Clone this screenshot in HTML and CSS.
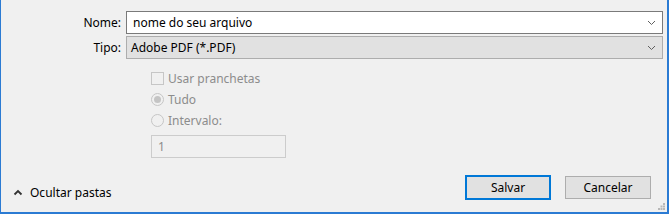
FILE: index.html
```html
<!DOCTYPE html>
<html>
<head>
  <meta charset="UTF-8" />
  <title>Salvar como</title>
  <link rel="stylesheet" href="styles.css">
</head>
<body>
<div class="dialog">
  <div class="fields">
    <div class="row">
      <label class="lbl">Nome:</label>
      <div class="combo edit">
        <span class="val">nome do seu arquivo</span>
        <svg class="arrow" width="9" height="6" viewBox="0 0 9 6"><polyline points="1,1 4.5,4.5 8,1" fill="none" stroke="#606060" stroke-width="1"/></svg>
      </div>
    </div>
    <div class="row">
      <label class="lbl">Tipo:</label>
      <div class="combo list">
        <span class="val">Adobe PDF (*.PDF)</span>
        <svg class="arrow" width="9" height="6" viewBox="0 0 9 6"><polyline points="1,1 4.5,4.5 8,1" fill="none" stroke="#606060" stroke-width="1"/></svg>
      </div>
    </div>
  </div>

  <div class="options">
    <div class="opt"><span class="check"></span>Usar pranchetas</div>
    <div class="opt"><span class="radio on"></span>Tudo</div>
    <div class="opt"><span class="radio"></span>Intervalo:</div>
    <div class="range">1</div>
  </div>

  <div class="footer">
    <div class="toggle">
      <svg width="10" height="7" viewBox="0 0 10 7"><polyline points="1.5,5.5 5,2 8.5,5.5" fill="none" stroke="#333" stroke-width="1.8"/></svg>
      <span>Ocultar pastas</span>
    </div>
    <div class="buttons">
      <button class="btn primary">Salvar</button>
      <button class="btn">Cancelar</button>
    </div>
    <svg class="grip" width="7" height="7" viewBox="0 0 7 7">
      <rect x="5" y="0" width="2" height="2" fill="#b8b8b8"/>
      <rect x="2.5" y="2.5" width="2" height="2" fill="#b8b8b8"/>
      <rect x="5" y="2.5" width="2" height="2" fill="#b8b8b8"/>
      <rect x="0" y="5" width="2" height="2" fill="#b8b8b8"/>
      <rect x="2.5" y="5" width="2" height="2" fill="#b8b8b8"/>
      <rect x="5" y="5" width="2" height="2" fill="#b8b8b8"/>
    </svg>
  </div>
</div>
</body>
</html>
```

FILE: styles.css
```css
html, body {
  margin: 0;
  padding: 0;
  background: #f0f0f0;
}

.dialog {
  position: relative;
  box-sizing: border-box;
  width: 669px;
  height: 214px;
  background: #f0f0f0;
  border-left: 1px solid #2b7bd3;
  border-right: 2px solid #2b7bd3;
  border-bottom: 2px solid #2b7bd3;
  font-family: "Noto Sans", "Liberation Sans", sans-serif;
  font-size: 12px;
  color: #000;
  display: flex;
  flex-direction: column;
}

.fields {
  padding: 11px 4px 0 0;
  display: flex;
  flex-direction: column;
  gap: 2px;
}

.row {
  display: grid;
  grid-template-columns: 125px 1fr;
  align-items: center;
}

.lbl {
  text-align: right;
  padding-right: 5px;
}

.combo {
  box-sizing: border-box;
  height: 23px;
  display: flex;
  align-items: center;
  justify-content: space-between;
  padding: 0 6px 0 6px;
}
.combo.edit {
  background: #fff;
  border: 1px solid #7a7a7a;
}
.combo.list {
  background: #e1e1e1;
  border: 1px solid #adadad;
  padding-left: 4px;
}
.arrow {
  display: block;
}

.options {
  margin: 9px 0 0 150px;
  color: #8c8c8c;
}

.opt {
  height: 21px;
  display: flex;
  align-items: center;
}

.check {
  box-sizing: border-box;
  width: 13px;
  height: 13px;
  border: 1px solid #c6c6c6;
  background: #f0f0f0;
  margin-right: 4px;
}

.radio {
  box-sizing: border-box;
  width: 13px;
  height: 13px;
  border: 1px solid #c6c6c6;
  border-radius: 50%;
  margin-right: 4px;
  display: flex;
  align-items: center;
  justify-content: center;
}
.radio.on::after {
  content: '';
  width: 7px;
  height: 7px;
  border-radius: 50%;
  background: #c4c4c4;
}

.range {
  box-sizing: border-box;
  width: 135px;
  height: 23px;
  margin-top: 4px;
  border: 1px solid #cccccc;
  padding-left: 6px;
  line-height: 21px;
}

.footer {
  margin-top: auto;
  height: 37px;
  display: flex;
  align-items: flex-start;
  justify-content: space-between;
}

.toggle {
  display: flex;
  align-items: center;
  gap: 7px;
  margin: 9px 0 0 12px;
}
.toggle svg {
  display: block;
}

.buttons {
  display: flex;
  gap: 14px;
  margin-right: 16px;
}

.btn {
  box-sizing: border-box;
  width: 86px;
  height: 23px;
  font-family: inherit;
  font-size: 12px;
  color: #000;
  background: #e1e1e1;
  border: 1px solid #adadad;
  padding: 0;
  margin-top: 1px;
}
.btn.primary {
  height: 25px;
  margin-top: 0;
  border: 2px solid #0078d7;
}

.grip {
  position: absolute;
  right: 2px;
  bottom: 2px;
}
```
